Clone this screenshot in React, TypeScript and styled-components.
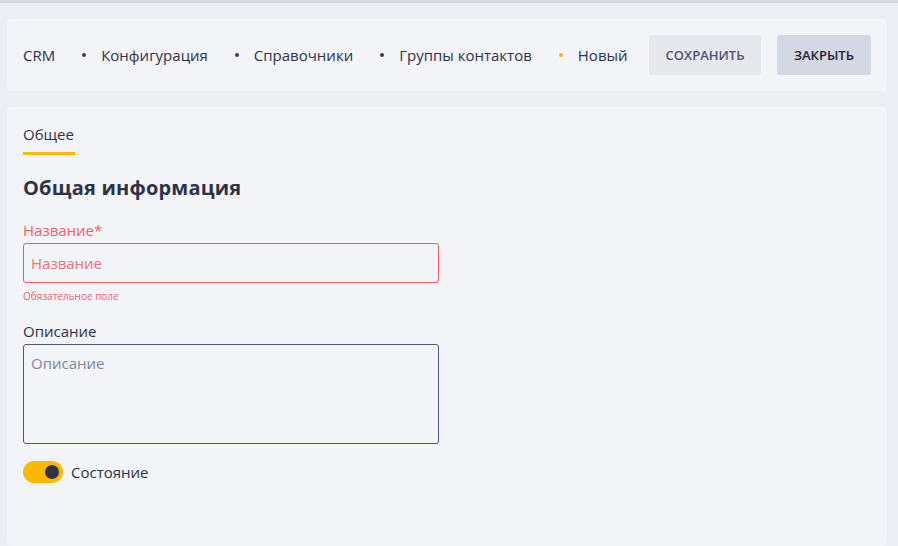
import { ReactElement } from "react";
import styled, { createGlobalStyle } from "styled-components";

const GlobalStyle = createGlobalStyle`
  html, body {
    margin: 0;
    padding: 0;
    background: #edeef3;
    font-family: "Open Sans", "Noto Sans", sans-serif;
    color: #2e3247;
  }
  * {
    box-sizing: border-box;
  }
`;

const Page = styled.div`
  display: flex;
  flex-direction: column;
  gap: 16px;
  min-height: 546px;
  border-top: 3px solid #d3d7e1;
  padding: 16px 11px 0 7px;
`;

const Card = styled.div<{ grow?: boolean }>`
  background: #f3f4f8;
  border-radius: 4px;
  flex: ${({ grow }) => (grow ? "1" : "none")};
`;

const HeaderCard = styled(Card)`
  display: flex;
  align-items: center;
  justify-content: space-between;
  height: 72px;
  padding: 0 16px;
`;

const Crumbs = styled.nav`
  display: flex;
  align-items: center;
  font-size: 15px;
  line-height: 20px;
  margin-top: -1px;
`;

const Crumb = styled.span`
  color: #2e3247;
  white-space: nowrap;
`;

const Dot = styled.span<{ active?: boolean }>`
  width: 4px;
  height: 4px;
  border-radius: 50%;
  background: ${({ active }) => (active ? "#fbb800" : "#3c405a")};
  margin: 0 15px 0 27px;
`;

const Actions = styled.div`
  display: flex;
  gap: 16px;
`;

const ActionButton = styled.button<{ primary?: boolean }>`
  height: 40px;
  padding: 0;
  border: none;
  border-radius: 3px;
  font-family: inherit;
  font-size: 13px;
  font-weight: 600;
  text-transform: uppercase;
  background: ${({ primary }) => (primary ? "#d4d8e2" : "#e6e8ee")};
  color: ${({ primary }) => (primary ? "#1f2236" : "#4d5470")};
  width: ${({ primary }) => (primary ? "94px" : "112px")};
`;

const Body = styled(Card)`
  padding: 16px 16px 0;
`;

const Tabs = styled.div`
  display: flex;
`;

const Tab = styled.div<{ active?: boolean }>`
  font-size: 15px;
  color: #2e3247;
  padding: 1px 1px 8px 0;
  border-bottom: 3px solid ${({ active }) => (active ? "#fbb800" : "transparent")};
`;

const Title = styled.h2`
  margin: 19px 0 0;
  font-size: 20px;
  font-weight: 700;
  letter-spacing: 0.2px;
  color: #2e3247;
`;

const Form = styled.div`
  width: 416px;
  display: flex;
  flex-direction: column;
  margin-top: 20px;
`;

const Field = styled.div`
  display: flex;
  flex-direction: column;
  margin-bottom: 20px;
`;

const Label = styled.label<{ error?: boolean }>`
  font-size: 15px;
  line-height: 19px;
  color: ${({ error }) => (error ? "#f0616a" : "#2e3247")};
  margin-bottom: 3px;
`;

const TextInput = styled.input<{ error?: boolean }>`
  height: 40px;
  border: 1px solid ${({ error }) => (error ? "#f05a60" : "#4f5680")};
  border-radius: 3px;
  background: transparent;
  padding: 0 7px;
  font-family: inherit;
  font-size: 15px;
  outline: none;
  &::placeholder {
    color: ${({ error }) => (error ? "#f0707a" : "#7f86a0")};
  }
`;

const TextArea = styled.textarea`
  height: 100px;
  border: 1px solid #4f5680;
  border-radius: 3px;
  background: transparent;
  padding: 8px 7px;
  font-family: inherit;
  font-size: 15px;
  resize: none;
  outline: none;
  &::placeholder {
    color: #7f86a0;
  }
`;

const Hint = styled.span`
  font-size: 10px;
  color: #f0616a;
  margin-top: 6px;
  margin-bottom: -1px;
`;

const SwitchRow = styled.div`
  display: flex;
  align-items: center;
  gap: 8px;
  margin-top: -3px;
  font-size: 15px;
  line-height: 19px;
`;

const Switch = styled.span<{ on?: boolean }>`
  position: relative;
  width: 40px;
  height: 22px;
  border-radius: 11px;
  background: ${({ on }) => (on ? "#fbb800" : "#c9ccd8")};
  &::after {
    content: "";
    position: absolute;
    top: 4px;
    left: ${({ on }) => (on ? "22px" : "4px")};
    width: 14px;
    height: 14px;
    border-radius: 50%;
    background: #2f3349;
  }
`;

const crumbs = ["CRM", "Конфигурация", "Справочники", "Группы контактов"];

export default function App(): ReactElement {
  return (
    <>
      <GlobalStyle />
      <Page>
        <HeaderCard>
          <Crumbs>
            {crumbs.map((c, i) => (
              <span key={c} style={{ display: "contents" }}>
                {i > 0 && <Dot />}
                <Crumb>{c}</Crumb>
              </span>
            ))}
            <Dot active />
            <Crumb>Новый</Crumb>
          </Crumbs>
          <Actions>
            <ActionButton>Сохранить</ActionButton>
            <ActionButton primary>Закрыть</ActionButton>
          </Actions>
        </HeaderCard>
        <Body grow>
          <Tabs>
            <Tab active>Общее</Tab>
          </Tabs>
          <Title>Общая информация</Title>
          <Form>
            <Field>
              <Label error>Название*</Label>
              <TextInput error placeholder="Название" />
              <Hint>Обязательное поле</Hint>
            </Field>
            <Field>
              <Label>Описание</Label>
              <TextArea placeholder="Описание" />
            </Field>
            <SwitchRow>
              <Switch on />
              <span>Состояние</span>
            </SwitchRow>
          </Form>
        </Body>
      </Page>
    </>
  );
}
